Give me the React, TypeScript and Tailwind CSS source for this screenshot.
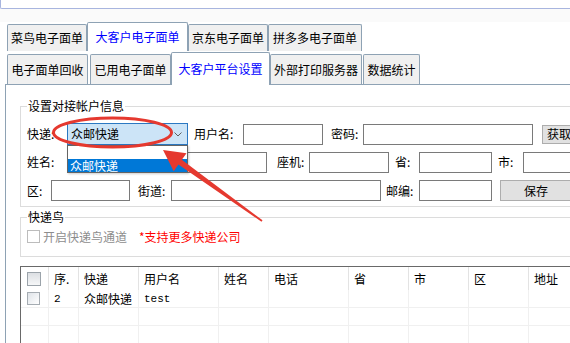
import React from 'react';

const tabOff =
  'flex items-center justify-center border border-b-0 border-[#8ea2b4] bg-[#f0f0f0] rounded-t-[2px] text-black';
const tabOn =
  'flex items-center justify-center border border-b-0 border-[#8ea2b4] bg-white rounded-t-[2px] text-[#0000ff]';
const box = 'h-[21px] border border-[#7a7a7a] bg-white';
const btn = 'flex items-center justify-center border border-[#adadad] bg-[#e1e1e1]';

const columns = [
  { label: '序.', w: 'w-[30px]' },
  { label: '快递', w: 'w-[60px]' },
  { label: '用户名', w: 'w-[80px]' },
  { label: '姓名', w: 'w-[50px]' },
  { label: '电话', w: 'w-[80px]' },
  { label: '省', w: 'w-[60px]' },
  { label: '市', w: 'w-[60px]' },
  { label: '区', w: 'w-[60px]' },
  { label: '地址', w: 'w-[80px]' },
];

const rowData = ['2', '众邮快递', 'test', '', '', '', '', '', ''];

const Check = ({ big }: { big?: boolean }) => (
  <div
    className={
      big
        ? 'w-[14px] h-[14px] border border-[#9ba3aa] bg-gradient-to-b from-[#dcdfe3] to-[#f6f7f8]'
        : 'w-[13px] h-[13px] border border-[#a5acb2] bg-gradient-to-br from-[#dfe3e8] to-white'
    }
  />
);

const App: React.FC = () => {
  return (
    <div className="relative w-[570px] h-[343px] overflow-hidden bg-white text-[12px] leading-[14px] text-black font-['Noto_Sans_CJK_SC','Noto_Sans',sans-serif]">
      {/* top input strip */}
      <div className="h-[9px] border-b border-l border-[#a8b5df] rounded-bl-[2px] bg-white" />
      <div className="h-[13px] bg-[#fafafa]" />

      {/* tab row 1 */}
      <div className="flex items-end h-[29px]">
        <div className={`${tabOff} ml-[7px] w-[80px] h-[27px]`}>菜鸟电子面单</div>
        <div className={`${tabOn} w-[101px] h-[29px]`}>大客户电子面单</div>
        <div className={`${tabOff} w-[80px] h-[27px]`}>京东电子面单</div>
        <div className={`${tabOff} w-[94px] h-[27px]`}>拼多多电子面单</div>
      </div>

      {/* tab row 2 */}
      <div className="relative z-10 flex items-end h-[34px] -mb-px">
        <div className={`${tabOff} ml-[7px] w-[81px] h-[30px] mb-px`}>电子面单回收</div>
        <div className={`${tabOff} ml-[2px] w-[81px] h-[30px] mb-px`}>已用电子面单</div>
        <div className={`${tabOn} w-[99px] h-[33px]`}>大客户平台设置</div>
        <div className={`${tabOff} w-[92px] h-[30px] mb-px`}>外部打印服务器</div>
        <div className={`${tabOff} ml-px w-[57px] h-[30px] mb-px`}>数据统计</div>
      </div>

      {/* panel */}
      <div className="ml-[5px] h-[300px] border-l border-t border-[#8ea2b4] bg-white pt-[14px] pl-[14px]">
        {/* account settings */}
        <fieldset className="w-[600px] border border-[#dcdcdc] pb-[5px]">
          <legend className="ml-[6px] px-px leading-[14px]">设置对接帐户信息</legend>
          <div className="pl-[6px] pt-[10px]">
            <div className="flex items-center h-[22px]">
              <span className="w-[40px]">快递:</span>
              <div className="relative">
                <div className="flex items-center justify-between w-[121px] h-[22px] border border-[#2b78c2] bg-[#cce4f7] pl-[3px] pr-[5px]">
                  <span>众邮快递</span>
                  <svg width="8" height="5" viewBox="0 0 8 5">
                    <path d="M0.5 0.5 L4 4 L7.5 0.5" fill="none" stroke="#606060" strokeWidth="1" />
                  </svg>
                </div>
                <div className="absolute left-0 top-full z-20 w-[121px] border border-[#646464] bg-white shadow-[1px_1px_2px_rgba(0,0,0,0.2)]">
                  <div className="h-[13px]" />
                  <div className="h-[13px] bg-[#0078d7] pl-[2px] text-white leading-[13px]">众邮快递</div>
                </div>
              </div>
              <span className="ml-[6px] w-[49px]">用户名:</span>
              <div className={`${box} w-[80px]`} />
              <span className="ml-[8px] w-[32px]">密码:</span>
              <div className={`${box} w-[170px]`} />
              <div className={`${btn} ml-[9px] w-[50px] h-[19px] pl-[4px] justify-start`}>获取</div>
            </div>

            <div className="flex items-center h-[22px] mt-[6px]">
              <span className="w-[40px]">姓名:</span>
              <div className={`${box} w-[200px]`} />
              <span className="ml-[10px] w-[32px]">座机:</span>
              <div className={`${box} w-[80px]`} />
              <span className="ml-[6px] w-[24px]">省:</span>
              <div className={`${box} w-[73px]`} />
              <span className="ml-[6px] w-[25px]">市:</span>
              <div className={`${box} w-[80px]`} />
            </div>

            <div className="flex items-center h-[21px] mt-[7px]">
              <span className="w-[24px]">区:</span>
              <div className={`${box} w-[79px]`} />
              <span className="ml-[8px] w-[33px]">街道:</span>
              <div className={`${box} w-[210px]`} />
              <span className="ml-[5px] w-[33px]">邮编:</span>
              <div className={`${box} w-[73px]`} />
              <div className={`${btn} ml-[8px] w-[72px] h-[21px]`}>保存</div>
            </div>
          </div>
        </fieldset>

        {/* kdniao */}
        <fieldset className="mt-[3px] w-[600px] border border-[#dcdcdc] pb-[13px]">
          <legend className="ml-[6px] px-px leading-[14px]">快递鸟</legend>
          <div className="flex items-center h-[13px] mt-[6px] pl-[6px]">
            <div className="w-[13px] h-[13px] border border-[#bcbcbc] bg-white" />
            <span className="ml-[3px] text-[#8d8d8d]">开启快递鸟通道</span>
            <span className="ml-[12px] text-[#ff0000]">*支持更多快递公司</span>
          </div>
        </fieldset>

        {/* account table */}
        <div className="mt-[9px] w-[600px] border-t border-l border-[#696969]">
          <div className="flex h-[23px]">
            <div className="flex items-center w-[28px] pl-[6px] border-r border-[#e3e3e3]">
              <Check big />
            </div>
            {columns.map((c) => (
              <div key={c.label} className={`flex items-center ${c.w} pl-[5px] border-r border-[#e3e3e3]`}>
                {c.label}
              </div>
            ))}
          </div>
          {[0, 1, 2].map((r) => (
            <div key={r} className="flex h-[18px] border-b border-[#f0f0f0]">
              <div className="flex items-center w-[28px] pl-[6px] border-r border-[#f0f0f0]">
                {r === 0 && <Check />}
              </div>
              {columns.map((c, i) => (
                <div
                  key={c.label}
                  className={`flex items-center ${c.w} pl-[5px] border-r border-[#f0f0f0] ${
                    i === 0 || i === 2 ? "font-['Liberation_Mono',monospace] text-[11px]" : ''
                  }`}
                >
                  {r === 0 ? rowData[i] : ''}
                </div>
              ))}
            </div>
          ))}
        </div>
      </div>

      {/* red annotation */}
      <svg className="pointer-events-none absolute left-0 top-0 z-30" width="570" height="343" viewBox="0 0 570 343">
        <ellipse cx="112.5" cy="132.5" rx="59" ry="14.5" fill="none" stroke="#e5392f" strokeWidth="3" />
        <polygon
          points="163,150 186.5,153.2 181.8,159.8 262.5,220.3 261.5,221.7 178.4,164.6 173.7,171.2"
          fill="#e5392f"
        />
      </svg>
    </div>
  );
};

export default App;
